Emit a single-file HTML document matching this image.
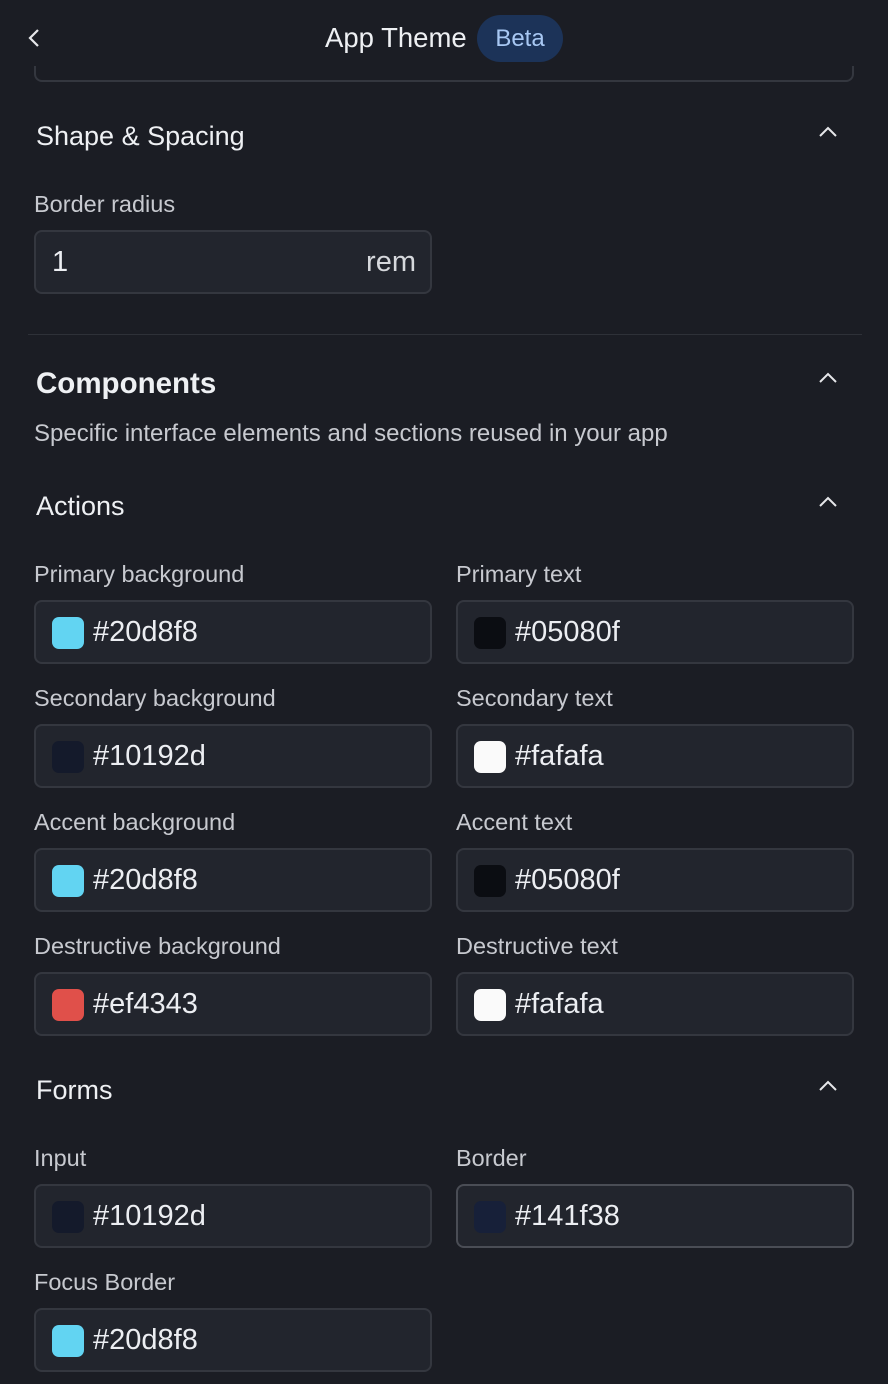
<!DOCTYPE html>
<html><head><meta charset="utf-8"><style>
*{box-sizing:border-box;margin:0;padding:0}
body{width:888px;height:1384px;background:#1b1d24;font-family:"Liberation Sans",sans-serif;color:#e6e7ea;position:relative;overflow:hidden}
.a{position:absolute}
.lbl{position:absolute;font-size:23.5px;color:#c7c9cf;line-height:26px}
.inp{position:absolute;width:398px;height:64px;background:#22252d;border:2px solid #34373f;border-radius:8px}
.sw{position:absolute;left:16px;top:15px;width:32px;height:32px;border-radius:7px}
.val{position:absolute;left:57px;top:14px;font-size:29px;color:#eceef2;line-height:32px}
.h{position:absolute;left:36px;font-size:27px;color:#eef0f3}
.chev{position:absolute;left:818px;width:20px;height:12px}
</style></head><body>
<svg class="a" style="left:26px;top:28px" width="16" height="20"><path d="M12 2 L4 10 L12 18" stroke="#e6e7ea" stroke-width="2.2" fill="none"/></svg>
<div class="a" style="left:325px;top:22px;font-size:27.5px;color:#eef0f3">App Theme</div>
<div class="a" style="left:477px;top:15px;width:86px;height:47px;border-radius:24px;background:#1c3358;color:#a8c8f3;font-size:24px;line-height:47px;text-align:center">Beta</div>
<div class="a" style="left:34px;top:66px;width:820px;height:16px;border:2px solid #34373f;border-top:none;border-radius:0 0 8px 8px"></div>
<div class="h" style="top:121px">Shape &amp; Spacing</div>
<svg class="chev" style="top:126px"><path d="M2 10 L10 2 L18 10" stroke="#e6e7ea" stroke-width="2" fill="none"/></svg>
<div class="lbl" style="left:34px;top:191px">Border radius</div>
<div class="inp" style="left:34px;top:230px"><div class="val" style="left:16px">1</div><div class="val" style="left:auto;right:14px;color:#d6d8dc">rem</div></div>
<div class="a" style="left:28px;top:334px;width:834px;height:1px;background:#2e3138"></div>
<div class="h" style="top:367px;font-weight:bold;font-size:29.5px">Components</div>
<svg class="chev" style="top:372px"><path d="M2 10 L10 2 L18 10" stroke="#e6e7ea" stroke-width="2" fill="none"/></svg>
<div class="lbl" style="left:34px;top:421px;font-size:24px">Specific interface elements and sections reused in your app</div>
<div class="h" style="top:491px">Actions</div>
<svg class="chev" style="top:496px"><path d="M2 10 L10 2 L18 10" stroke="#e6e7ea" stroke-width="2" fill="none"/></svg>

<div class="lbl" style="left:34px;top:561px">Primary background</div>
<div class="lbl" style="left:456px;top:561px">Primary text</div>
<div class="inp" style="left:34px;top:600px"><div class="sw" style="background:#62d4f2"></div><div class="val">#20d8f8</div></div>
<div class="inp" style="left:456px;top:600px"><div class="sw" style="background:#0b0d12"></div><div class="val">#05080f</div></div>

<div class="lbl" style="left:34px;top:685px">Secondary background</div>
<div class="lbl" style="left:456px;top:685px">Secondary text</div>
<div class="inp" style="left:34px;top:724px"><div class="sw" style="background:#141a2b"></div><div class="val">#10192d</div></div>
<div class="inp" style="left:456px;top:724px"><div class="sw" style="background:#fafafa"></div><div class="val">#fafafa</div></div>

<div class="lbl" style="left:34px;top:809px">Accent background</div>
<div class="lbl" style="left:456px;top:809px">Accent text</div>
<div class="inp" style="left:34px;top:848px"><div class="sw" style="background:#62d4f2"></div><div class="val">#20d8f8</div></div>
<div class="inp" style="left:456px;top:848px"><div class="sw" style="background:#0b0d12"></div><div class="val">#05080f</div></div>

<div class="lbl" style="left:34px;top:933px">Destructive background</div>
<div class="lbl" style="left:456px;top:933px">Destructive text</div>
<div class="inp" style="left:34px;top:972px"><div class="sw" style="background:#e0504a"></div><div class="val">#ef4343</div></div>
<div class="inp" style="left:456px;top:972px"><div class="sw" style="background:#fafafa"></div><div class="val">#fafafa</div></div>

<div class="h" style="top:1075px">Forms</div>
<svg class="chev" style="top:1080px"><path d="M2 10 L10 2 L18 10" stroke="#e6e7ea" stroke-width="2" fill="none"/></svg>

<div class="lbl" style="left:34px;top:1145px">Input</div>
<div class="lbl" style="left:456px;top:1145px">Border</div>
<div class="inp" style="left:34px;top:1184px"><div class="sw" style="background:#141a2b"></div><div class="val">#10192d</div></div>
<div class="inp" style="left:456px;top:1184px;border-color:#4a4d55"><div class="sw" style="background:#172039"></div><div class="val">#141f38</div></div>

<div class="lbl" style="left:34px;top:1269px">Focus Border</div>
<div class="inp" style="left:34px;top:1308px"><div class="sw" style="background:#62d4f2"></div><div class="val">#20d8f8</div></div>
</body></html>
